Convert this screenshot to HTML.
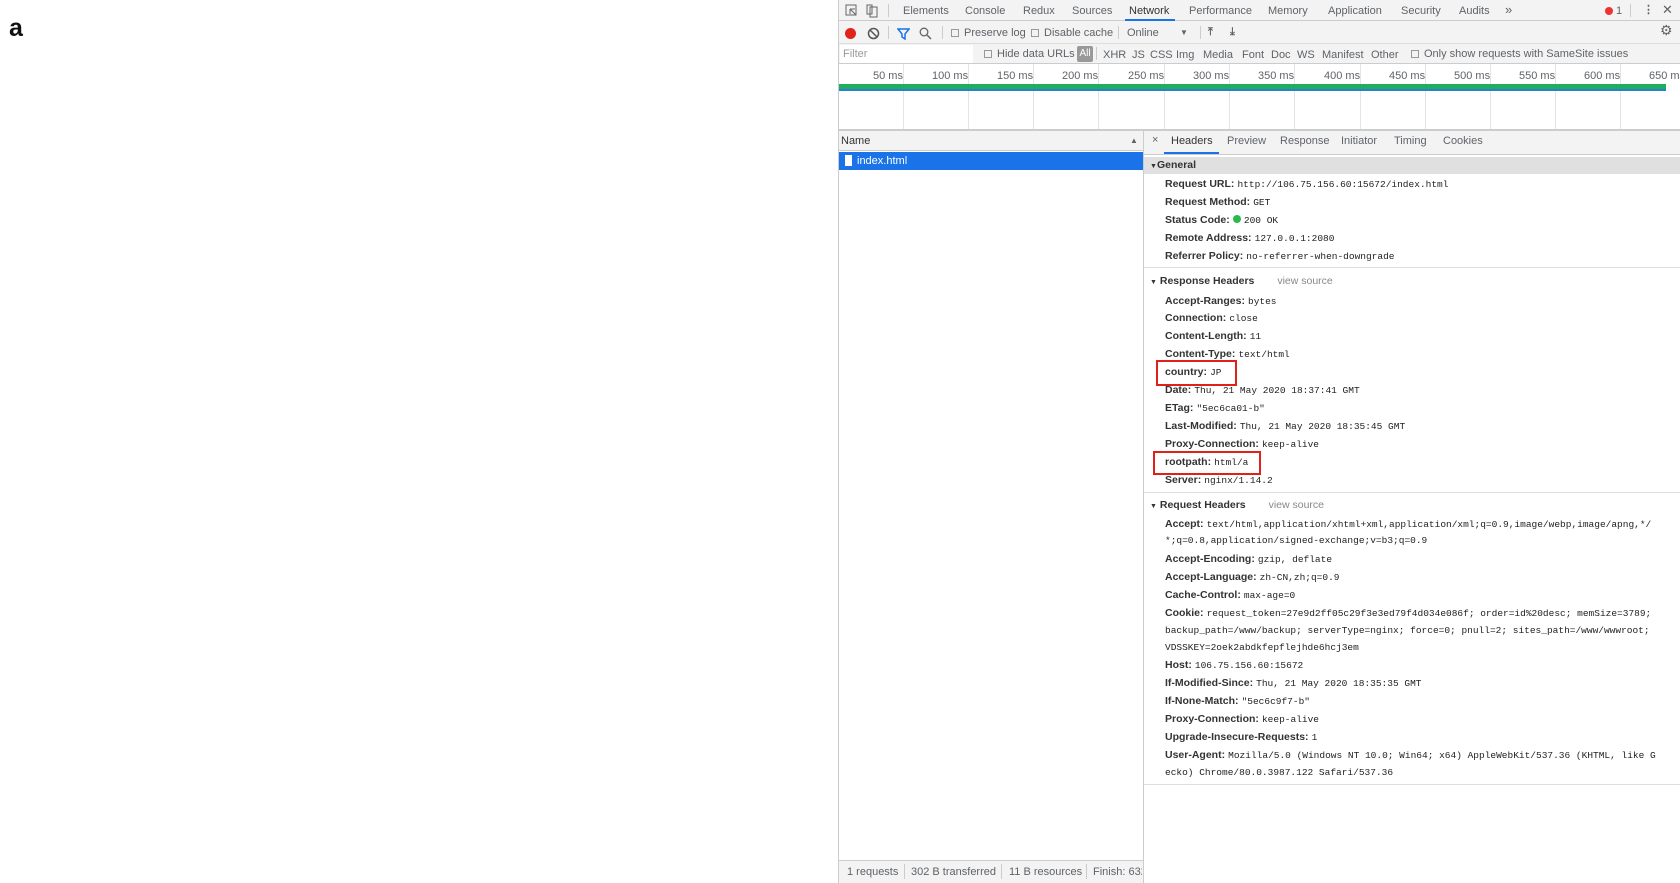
<!DOCTYPE html>
<html><head><meta charset="utf-8"><style>
*{margin:0;padding:0;box-sizing:border-box}
body{width:1680px;height:883px;position:relative;background:#fff;font-family:"Liberation Sans",sans-serif;font-size:11px;color:#333;overflow:hidden}
.a{position:absolute;white-space:nowrap;line-height:14px}
.g{color:#5f6368}
.m{font-family:"Liberation Mono",monospace;font-size:9.5px;color:#222}
.b{font-weight:bold;color:#333;font-size:10.5px}
.cb{display:inline-block;width:8px;height:8px;border:1px solid #999;background:#f3f3f3;vertical-align:-1px;margin-right:5px}
.vl{position:absolute;width:1px;background:#ccc}
.hl{position:absolute;height:1px;background:#ddd}
</style></head><body>
<div class="a" style="left:9px;top:14px;font-size:25px;line-height:28px;font-weight:bold;color:#111">a</div>

<div class="a" style="left:838px;top:0;width:842px;height:883px;background:#fff;border-left:1px solid #ccc"></div>
<div class="a" style="left:839px;top:0;width:841px;height:21px;background:#f3f3f3;border-bottom:1px solid #ccc"></div>
<div class="a" style="left:839px;top:21px;width:841px;height:23px;background:#f3f3f3;border-bottom:1px solid #ddd"></div>
<div class="a" style="left:839px;top:44px;width:841px;height:20px;background:#f3f3f3;border-bottom:1px solid #ccc"></div>

<svg class="a" style="left:845px;top:4px" width="40" height="14"><rect x="1" y="1" width="10" height="10" fill="none" stroke="#666"/><path d="M5 5l6 6M5 5v5M5 5h5" stroke="#666"/><rect x="25" y="3" width="7" height="10" fill="none" stroke="#666"/><rect x="22" y="1" width="5" height="9" fill="none" stroke="#666"/></svg>
<div class="vl" style="left:888px;top:4px;height:13px"></div>
<div class="a g" style="left:903px;top:4px">Elements</div>
<div class="a g" style="left:965px;top:4px">Console</div>
<div class="a g" style="left:1023px;top:4px">Redux</div>
<div class="a g" style="left:1072px;top:4px">Sources</div>
<div class="a" style="left:1129px;top:4px;color:#333">Network</div>
<div class="a" style="left:1125px;top:19px;width:50px;height:2px;background:#1a73e8"></div>
<div class="a g" style="left:1189px;top:4px">Performance</div>
<div class="a g" style="left:1268px;top:4px">Memory</div>
<div class="a g" style="left:1328px;top:4px">Application</div>
<div class="a g" style="left:1401px;top:4px">Security</div>
<div class="a g" style="left:1459px;top:4px">Audits</div>
<div class="a g" style="left:1505px;top:3px;font-size:13px">»</div>
<div class="a" style="left:1605px;top:7px;width:8px;height:8px;border-radius:50%;background:#e33"></div>
<div class="a g" style="left:1616px;top:4px">1</div>
<div class="vl" style="left:1630px;top:4px;height:13px"></div>
<div class="a g" style="left:1643px;top:3px;font-weight:bold">⋮</div>
<div class="a g" style="left:1662px;top:3px;font-size:13px">✕</div>

<div class="a" style="left:845px;top:28px;width:11px;height:11px;border-radius:50%;background:#e2231a"></div>
<svg class="a" style="left:867px;top:27px" width="13" height="13"><circle cx="6.5" cy="6.5" r="5" fill="none" stroke="#555" stroke-width="1.5"/><path d="M3 3l7 7" stroke="#555" stroke-width="1.5"/></svg>
<div class="vl" style="left:888px;top:26px;height:13px"></div>
<svg class="a" style="left:897px;top:27px" width="13" height="13"><path d="M1 2h11l-4 5v5l-3-2v-3z" fill="none" stroke="#1a73e8" stroke-width="1.5"/></svg>
<svg class="a" style="left:919px;top:27px" width="13" height="13"><circle cx="5" cy="5" r="3.8" fill="none" stroke="#666" stroke-width="1.3"/><path d="M8 8l4 4" stroke="#666" stroke-width="1.5"/></svg>
<div class="vl" style="left:942px;top:26px;height:13px"></div>
<div class="a g" style="left:951px;top:26px"><span class="cb"></span>Preserve log</div>
<div class="a g" style="left:1031px;top:26px"><span class="cb"></span>Disable cache</div>
<div class="vl" style="left:1118px;top:26px;height:13px"></div>
<div class="a g" style="left:1127px;top:26px">Online</div>
<div class="a g" style="left:1180px;top:26px;font-size:8px">▼</div>
<div class="vl" style="left:1200px;top:26px;height:13px"></div>
<div class="a g" style="left:1208px;top:25px;font-weight:bold">⤒</div>
<div class="a g" style="left:1230px;top:25px;font-weight:bold">⤓</div>
<div class="a g" style="left:1660px;top:23px;font-size:14px">⚙</div>

<div class="a" style="left:840px;top:45px;width:133px;height:18px;background:#fff"></div>
<div class="a" style="left:843px;top:47px;color:#999">Filter</div>
<div class="a g" style="left:984px;top:47px"><span class="cb"></span>Hide data URLs</div>
<div class="a" style="left:1077px;top:46px;width:16px;height:16px;background:#999;border-radius:2px;color:#fff;font-size:10px;text-align:center;line-height:16px">All</div>
<div class="vl" style="left:1096px;top:47px;height:13px"></div>
<div class="a g" style="left:1103px;top:48px">XHR</div>
<div class="a g" style="left:1132px;top:48px">JS</div>
<div class="a g" style="left:1150px;top:48px">CSS</div>
<div class="a g" style="left:1176px;top:48px">Img</div>
<div class="a g" style="left:1203px;top:48px">Media</div>
<div class="a g" style="left:1242px;top:48px">Font</div>
<div class="a g" style="left:1271px;top:48px">Doc</div>
<div class="a g" style="left:1297px;top:48px">WS</div>
<div class="a g" style="left:1322px;top:48px">Manifest</div>
<div class="a g" style="left:1371px;top:48px">Other</div>
<div class="a g" style="left:1411px;top:47px"><span class="cb"></span>Only show requests with SameSite issues</div>

<div class="vl" style="left:903px;top:64px;height:66px;background:#e4e4e4"></div>
<div class="vl" style="left:968px;top:64px;height:66px;background:#e4e4e4"></div>
<div class="vl" style="left:1033px;top:64px;height:66px;background:#e4e4e4"></div>
<div class="vl" style="left:1098px;top:64px;height:66px;background:#e4e4e4"></div>
<div class="vl" style="left:1164px;top:64px;height:66px;background:#e4e4e4"></div>
<div class="vl" style="left:1229px;top:64px;height:66px;background:#e4e4e4"></div>
<div class="vl" style="left:1294px;top:64px;height:66px;background:#e4e4e4"></div>
<div class="vl" style="left:1360px;top:64px;height:66px;background:#e4e4e4"></div>
<div class="vl" style="left:1425px;top:64px;height:66px;background:#e4e4e4"></div>
<div class="vl" style="left:1490px;top:64px;height:66px;background:#e4e4e4"></div>
<div class="vl" style="left:1555px;top:64px;height:66px;background:#e4e4e4"></div>
<div class="vl" style="left:1620px;top:64px;height:66px;background:#e4e4e4"></div>
<div class="a g" style="left:873px;top:69px">50 ms</div>
<div class="a g" style="left:932px;top:69px">100 ms</div>
<div class="a g" style="left:997px;top:69px">150 ms</div>
<div class="a g" style="left:1062px;top:69px">200 ms</div>
<div class="a g" style="left:1128px;top:69px">250 ms</div>
<div class="a g" style="left:1193px;top:69px">300 ms</div>
<div class="a g" style="left:1258px;top:69px">350 ms</div>
<div class="a g" style="left:1324px;top:69px">400 ms</div>
<div class="a g" style="left:1389px;top:69px">450 ms</div>
<div class="a g" style="left:1454px;top:69px">500 ms</div>
<div class="a g" style="left:1519px;top:69px">550 ms</div>
<div class="a g" style="left:1584px;top:69px">600 ms</div>
<div class="a g" style="left:1649px;top:69px">650 ms</div>
<div class="a" style="left:839px;top:84px;width:827px;height:7px;background:#1fae5d;border-bottom:2px solid #2a7fd4"></div>
<div class="a" style="left:839px;top:129px;width:841px;height:2px;background:#ccc"></div>

<div class="a" style="left:839px;top:131px;width:304px;height:20px;background:#f3f3f3;border-bottom:1px solid #ccc"></div>
<div class="a" style="left:841px;top:134px">Name</div>
<div class="a g" style="left:1130px;top:134px;font-size:8px">▲</div>
<div class="a" style="left:839px;top:152px;width:304px;height:18px;background:#1a73e8"></div>
<div class="a" style="left:845px;top:155px;width:7px;height:11px;background:#fff"></div>
<div class="a" style="left:857px;top:154px;color:#fff">index.html</div>
<div class="vl" style="left:1143px;top:131px;height:752px;background:#ccc"></div>

<div class="a" style="left:839px;top:860px;width:304px;height:23px;background:#f3f3f3;border-top:1px solid #ccc"></div>
<div class="a g" style="left:847px;top:865px">1 requests</div>
<div class="vl" style="left:904px;top:864px;height:15px"></div>
<div class="a g" style="left:911px;top:865px">302 B transferred</div>
<div class="vl" style="left:1001px;top:864px;height:15px"></div>
<div class="a g" style="left:1009px;top:865px">11 B resources</div>
<div class="vl" style="left:1086px;top:864px;height:15px"></div>
<div class="a g" style="left:1093px;top:865px;width:49px;overflow:hidden">Finish: 632 ms</div>

<div class="a" style="left:1144px;top:131px;width:536px;height:24px;background:#f3f3f3;border-bottom:1px solid #ccc"></div>
<div class="a g" style="left:1152px;top:133px">×</div>
<div class="a" style="left:1171px;top:134px">Headers</div>
<div class="a" style="left:1164px;top:152px;width:55px;height:2px;background:#1a73e8"></div>
<div class="a g" style="left:1227px;top:134px">Preview</div>
<div class="a g" style="left:1280px;top:134px">Response</div>
<div class="a g" style="left:1341px;top:134px">Initiator</div>
<div class="a g" style="left:1394px;top:134px">Timing</div>
<div class="a g" style="left:1443px;top:134px">Cookies</div>

<div class="a" style="left:1144px;top:157px;width:536px;height:17px;background:#e0e0e0"></div>
<div class="a b" style="left:1150px;top:158px"><span style="font-size:7px">▼</span>General</div>

<div class="a" style="left:1165px;top:177px"><span class="b">Request URL:</span> <span class="m">http://106.75.156.60:15672/index.html</span></div>
<div class="a" style="left:1165px;top:195px"><span class="b">Request Method:</span> <span class="m">GET</span></div>
<div class="a" style="left:1165px;top:213px"><span class="b">Status Code:</span> <span style="display:inline-block;width:8px;height:8px;border-radius:50%;background:#2db84d"></span> <span class="m">200 OK</span></div>
<div class="a" style="left:1165px;top:231px"><span class="b">Remote Address:</span> <span class="m">127.0.0.1:2080</span></div>
<div class="a" style="left:1165px;top:249px"><span class="b">Referrer Policy:</span> <span class="m">no-referrer-when-downgrade</span></div>
<div class="hl" style="left:1144px;top:267px;width:536px"></div>

<div class="a b" style="left:1150px;top:274px"><span style="font-size:7px">▼</span> Response Headers <span style="font-weight:normal;color:#888;margin-left:20px">view source</span></div>
<div class="a" style="left:1165px;top:294px"><span class="b">Accept-Ranges:</span> <span class="m">bytes</span></div>
<div class="a" style="left:1165px;top:311px"><span class="b">Connection:</span> <span class="m">close</span></div>
<div class="a" style="left:1165px;top:329px"><span class="b">Content-Length:</span> <span class="m">11</span></div>
<div class="a" style="left:1165px;top:347px"><span class="b">Content-Type:</span> <span class="m">text/html</span></div>
<div class="a" style="left:1165px;top:365px"><span class="b">country:</span> <span class="m">JP</span></div>
<div class="a" style="left:1165px;top:383px"><span class="b">Date:</span> <span class="m">Thu, 21 May 2020 18:37:41 GMT</span></div>
<div class="a" style="left:1165px;top:401px"><span class="b">ETag:</span> <span class="m">"5ec6ca01-b"</span></div>
<div class="a" style="left:1165px;top:419px"><span class="b">Last-Modified:</span> <span class="m">Thu, 21 May 2020 18:35:45 GMT</span></div>
<div class="a" style="left:1165px;top:437px"><span class="b">Proxy-Connection:</span> <span class="m">keep-alive</span></div>
<div class="a" style="left:1165px;top:455px"><span class="b">rootpath:</span> <span class="m">html/a</span></div>
<div class="a" style="left:1165px;top:473px"><span class="b">Server:</span> <span class="m">nginx/1.14.2</span></div>
<div class="a" style="left:1156px;top:360px;width:81px;height:26px;border:2px solid #e0201a"></div>
<div class="a" style="left:1153px;top:451px;width:108px;height:24px;border:2px solid #e0201a"></div>
<div class="hl" style="left:1144px;top:492px;width:536px"></div>

<div class="a b" style="left:1150px;top:498px"><span style="font-size:7px">▼</span> Request Headers <span style="font-weight:normal;color:#888;margin-left:20px">view source</span></div>
<div class="a" style="left:1165px;top:517px"><span class="b">Accept:</span> <span class="m">text/html,application/xhtml+xml,application/xml;q=0.9,image/webp,image/apng,*/</span></div>
<div class="a m" style="left:1165px;top:534px">*;q=0.8,application/signed-exchange;v=b3;q=0.9</div>
<div class="a" style="left:1165px;top:552px"><span class="b">Accept-Encoding:</span> <span class="m">gzip, deflate</span></div>
<div class="a" style="left:1165px;top:570px"><span class="b">Accept-Language:</span> <span class="m">zh-CN,zh;q=0.9</span></div>
<div class="a" style="left:1165px;top:588px"><span class="b">Cache-Control:</span> <span class="m">max-age=0</span></div>
<div class="a" style="left:1165px;top:606px"><span class="b">Cookie:</span> <span class="m">request_token=27e9d2ff05c29f3e3ed79f4d034e086f; order=id%20desc; memSize=3789;</span></div>
<div class="a m" style="left:1165px;top:624px">backup_path=/www/backup; serverType=nginx; force=0; pnull=2; sites_path=/www/wwwroot;</div>
<div class="a m" style="left:1165px;top:641px">VDSSKEY=2oek2abdkfepflejhde6hcj3em</div>
<div class="a" style="left:1165px;top:658px"><span class="b">Host:</span> <span class="m">106.75.156.60:15672</span></div>
<div class="a" style="left:1165px;top:676px"><span class="b">If-Modified-Since:</span> <span class="m">Thu, 21 May 2020 18:35:35 GMT</span></div>
<div class="a" style="left:1165px;top:694px"><span class="b">If-None-Match:</span> <span class="m">"5ec6c9f7-b"</span></div>
<div class="a" style="left:1165px;top:712px"><span class="b">Proxy-Connection:</span> <span class="m">keep-alive</span></div>
<div class="a" style="left:1165px;top:730px"><span class="b">Upgrade-Insecure-Requests:</span> <span class="m">1</span></div>
<div class="a" style="left:1165px;top:748px"><span class="b">User-Agent:</span> <span class="m">Mozilla/5.0 (Windows NT 10.0; Win64; x64) AppleWebKit/537.36 (KHTML, like G</span></div>
<div class="a m" style="left:1165px;top:766px">ecko) Chrome/80.0.3987.122 Safari/537.36</div>
<div class="hl" style="left:1144px;top:784px;width:536px"></div>
</body></html>
